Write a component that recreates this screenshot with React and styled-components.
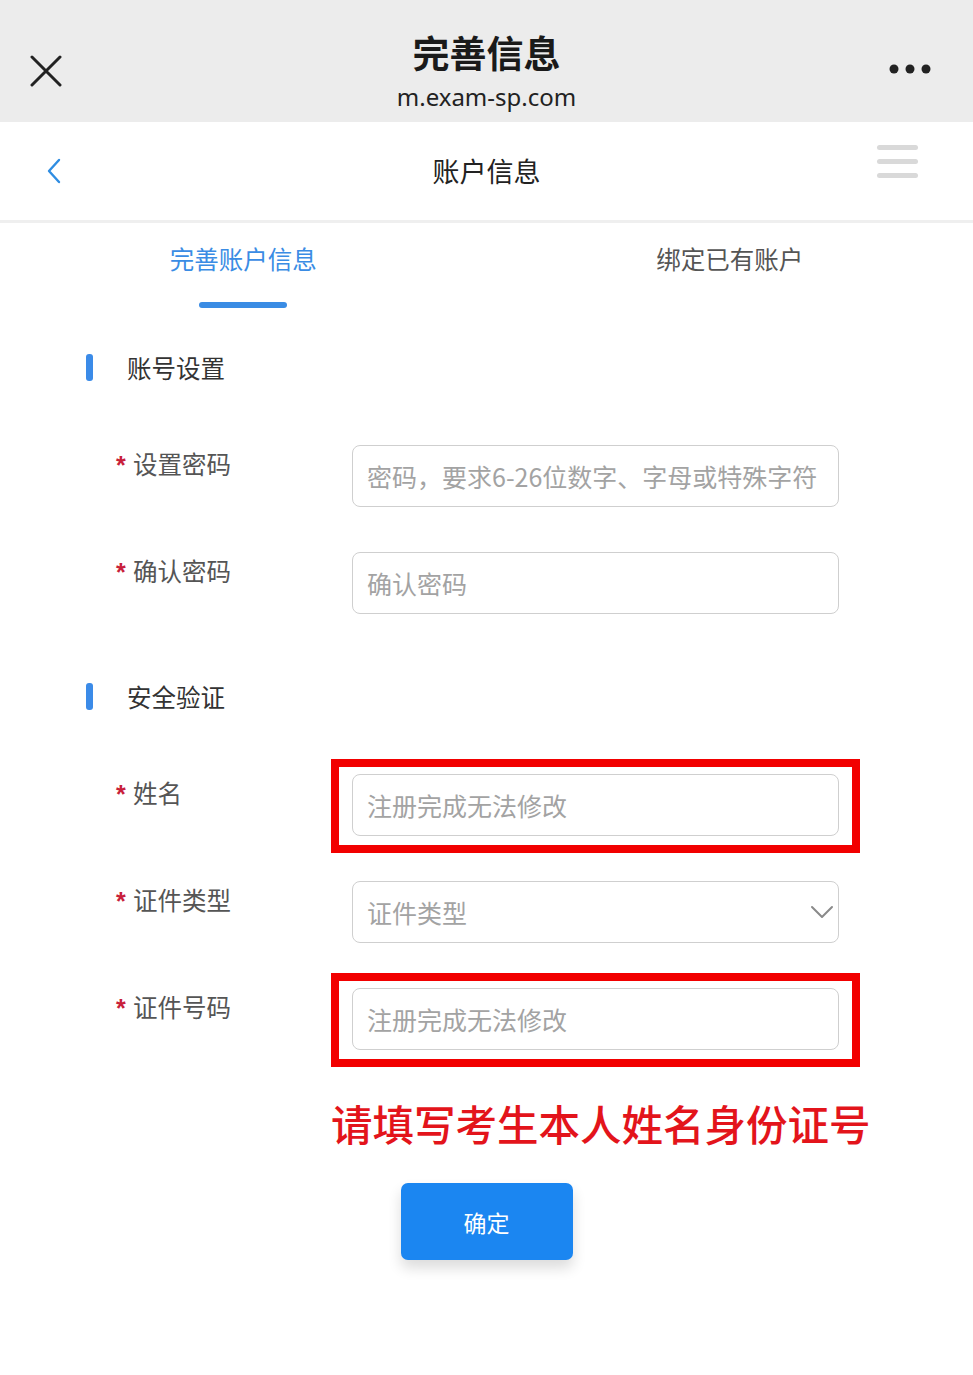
import styled, { createGlobalStyle } from 'styled-components';

const GlobalStyle = createGlobalStyle`
  html, body {
    margin: 0;
    padding: 0;
    background: #fff;
  }
  body {
    font-family: "Noto Sans CJK SC", "Noto Sans", sans-serif;
  }
  * { box-sizing: border-box; }
`;

const Page = styled.div`
  width: 100%;
  min-height: 1375px;
  background: #fff;
`;

const TopBar = styled.header`
  height: 122px;
  background: #ececec;
  display: grid;
  grid-template-columns: 1fr auto 1fr;
  align-items: start;
  padding-top: 30px;
`;

const CloseIcon = styled.svg`
  margin: 25px 0 0 30px;
`;

const MoreIcon = styled.svg`
  margin: 33px 42px 0 0;
  justify-self: end;
`;

const TitleBlock = styled.div`
  display: flex;
  flex-direction: column;
  align-items: center;
  gap: 8px;
`;

const Title = styled.h1`
  margin: 0;
  font-size: 37px;
  line-height: 44px;
  font-weight: 700;
  color: #1a1a1a;
`;

const Url = styled.div`
  font-family: "Noto Sans", "Open Sans", sans-serif;
  font-size: 24px;
  line-height: 30px;
  color: #222;
`;

const NavBar = styled.nav`
  height: 101px;
  border-bottom: 3px solid #efefef;
  display: grid;
  grid-template-columns: 1fr auto 1fr;
  align-items: center;
`;

const BackIcon = styled.svg`
  margin-left: 46px;
`;

const NavTitle = styled.div`
  text-align: center;
  font-size: 27px;
  color: #222;
  line-height: 30px;
`;

const Hamburger = styled.div`
  justify-self: end;
  width: 41px;
  margin: -20px 55px 0 0;
  display: flex;
  flex-direction: column;
  gap: 9px;

  span {
    display: block;
    height: 5px;
    border-radius: 3px;
    background: #d9d9d9;
  }
`;

const Tabs = styled.div`
  display: flex;
  height: 88px;
`;

const Tab = styled.div`
  flex: 1;
  display: flex;
  flex-direction: column;
  align-items: center;
  padding-top: 23px;
  font-size: 24.5px;
  line-height: 25px;
  color: ${({ $active }) => ($active ? '#3a8ce4' : '#555')};
`;

const Underline = styled.div`
  width: 88px;
  height: 6px;
  border-radius: 3px;
  background: #3a8ce4;
  margin-top: 31px;
`;

const Form = styled.div`
  padding: 42px 0 0 86px;
`;

const SectionHeader = styled.div`
  display: flex;
  align-items: center;
  height: 28px;
  margin-top: ${({ $top }) => $top || 0}px;
  margin-bottom: 64px;

  &::before {
    content: '';
    width: 7px;
    height: 27px;
    border-radius: 3px;
    background: #3b8be8;
  }
`;

const SectionTitle = styled.span`
  margin-left: 34px;
  font-size: 24.5px;
  color: #333;
`;

const FieldRow = styled.div`
  display: grid;
  grid-template-columns: 236px 487px;
  margin-left: 30px;
  margin-bottom: ${({ $last }) => ($last ? 0 : 45)}px;
  align-items: start;
`;

const Label = styled.label`
  display: flex;
  align-items: flex-start;
  padding-top: 6px;
  font-size: 24.5px;
  line-height: 25px;
  color: #555;

  b {
    font-family: "Liberation Sans", Arial, sans-serif;
    font-weight: 700;
    color: #c8203a;
    font-size: 25px;
    line-height: 24px;
    width: 17px;
    margin-top: 2px;
  }
`;

const Highlight = styled.div`
  position: relative;

  &::after {
    content: '';
    position: absolute;
    top: -15px;
    bottom: -17px;
    left: -21px;
    right: -21px;
    border: 8px solid #f20000;
    pointer-events: none;
  }
`;

const TextInput = styled.input`
  display: block;
  width: 100%;
  height: 62px;
  border: 1.5px solid #cfcfcf;
  border-radius: 8px;
  padding: 0 14px;
  font-family: inherit;
  font-size: 25px;
  color: #333;
  background: #fff;
  outline: none;

  &::placeholder {
    color: #a3a3a3;
  }
`;

const SelectBox = styled.div`
  height: 62px;
  border: 1.5px solid #cfcfcf;
  border-radius: 8px;
  padding: 0 4px 0 14px;
  display: flex;
  align-items: center;
  justify-content: space-between;
  font-size: 25px;
  color: #a3a3a3;
`;

const Notice = styled.div`
  margin: 48px 0 0 245px;
  font-size: 41.5px;
  line-height: 50px;
  font-weight: 500;
  color: #e3141b;
  white-space: nowrap;
`;

const ButtonRow = styled.div`
  display: flex;
  justify-content: center;
  margin: 35px 0 0 -86px;
`;

const Submit = styled.button`
  width: 172px;
  height: 77px;
  border: none;
  border-radius: 7px;
  background: #1b86f1;
  color: #fff;
  font-family: inherit;
  font-size: 23px;
  box-shadow: 0 8px 14px rgba(0, 0, 0, 0.14);
`;

const Field = ({ label, last, children }) => (
  <FieldRow $last={last}>
    <Label><b>*</b>{label}</Label>
    {children}
  </FieldRow>
);

export default function App() {
  return (
    <Page>
      <GlobalStyle />
      <TopBar>
        <CloseIcon width="32" height="32" viewBox="0 0 32 32">
          <path d="M2 2 L30 30 M30 2 L2 30" stroke="#222" strokeWidth="3" strokeLinecap="round" />
        </CloseIcon>
        <TitleBlock>
          <Title>完善信息</Title>
          <Url>m.exam-sp.com</Url>
        </TitleBlock>
        <MoreIcon width="42" height="12" viewBox="0 0 42 12">
          <circle cx="5" cy="6" r="4.5" fill="#222" />
          <circle cx="21" cy="6" r="4.5" fill="#222" />
          <circle cx="37" cy="6" r="4.5" fill="#222" />
        </MoreIcon>
      </TopBar>

      <NavBar>
        <BackIcon width="16" height="26" viewBox="0 0 16 26">
          <path d="M13 2 L3 13 L13 24" fill="none" stroke="#2f8de2" strokeWidth="2.4" strokeLinecap="round" strokeLinejoin="round" />
        </BackIcon>
        <NavTitle>账户信息</NavTitle>
        <Hamburger>
          <span />
          <span />
          <span />
        </Hamburger>
      </NavBar>

      <Tabs>
        <Tab $active>
          完善账户信息
          <Underline />
        </Tab>
        <Tab>绑定已有账户</Tab>
      </Tabs>

      <Form>
        <SectionHeader>
          <SectionTitle>账号设置</SectionTitle>
        </SectionHeader>
        <Field label="设置密码">
          <TextInput type="password" placeholder="密码，要求6-26位数字、字母或特殊字符" />
        </Field>
        <Field label="确认密码">
          <TextInput type="password" placeholder="确认密码" />
        </Field>

        <SectionHeader $top={68}>
          <SectionTitle>安全验证</SectionTitle>
        </SectionHeader>
        <Field label="姓名">
          <Highlight>
            <TextInput placeholder="注册完成无法修改" />
          </Highlight>
        </Field>
        <Field label="证件类型">
          <SelectBox>
            <span>证件类型</span>
            <svg width="24" height="16" viewBox="0 0 24 16">
              <path d="M2 3 L12 13 L22 3" fill="none" stroke="#8a8a8a" strokeWidth="2" strokeLinecap="round" strokeLinejoin="round" />
            </svg>
          </SelectBox>
        </Field>
        <Field label="证件号码" last>
          <Highlight>
            <TextInput placeholder="注册完成无法修改" />
          </Highlight>
        </Field>

        <Notice>请填写考生本人姓名身份证号</Notice>
        <ButtonRow>
          <Submit>确定</Submit>
        </ButtonRow>
      </Form>
    </Page>
  );
}
